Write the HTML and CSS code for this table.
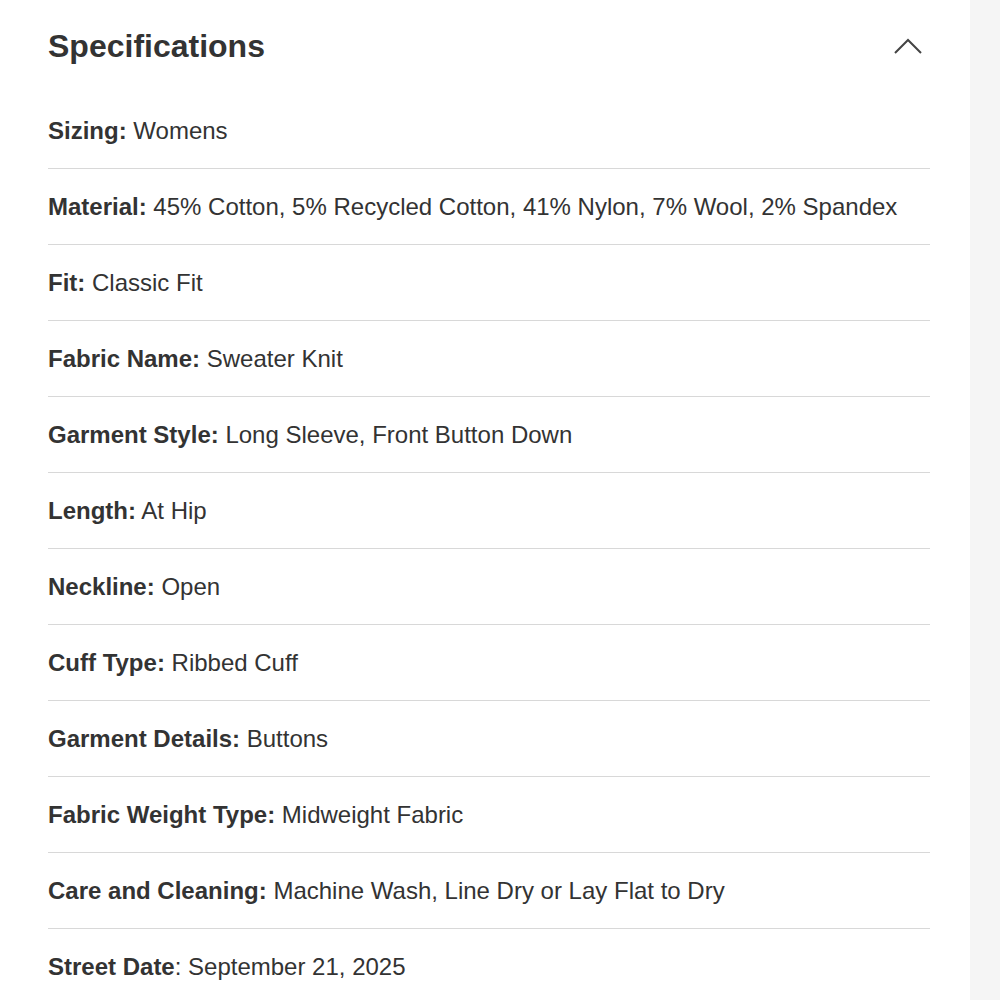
FILE: index.html
```html
<!DOCTYPE html>
<html>
<head>
<meta charset="utf-8">
<link rel="stylesheet" href="styles.css">
</head>
<body>
<div class="page">
  <main class="main">
    <div class="header">
      <h2 class="title">Specifications</h2>
      <svg class="chevron" width="30" height="18" viewBox="0 0 30 18"><path d="M2 16 L15 3 L28 16" fill="none" stroke="#444" stroke-width="2"/></svg>
    </div>
    <ul class="specs">
      <li class="row"><b>Sizing:</b> Womens</li>
      <li class="row"><b>Material:</b> 45% Cotton, 5% Recycled Cotton, 41% Nylon, 7% Wool, 2% Spandex</li>
      <li class="row"><b>Fit:</b> Classic Fit</li>
      <li class="row"><b>Fabric Name:</b> Sweater Knit</li>
      <li class="row"><b>Garment Style:</b> Long Sleeve, Front Button Down</li>
      <li class="row"><b>Length:</b> At Hip</li>
      <li class="row"><b>Neckline:</b> Open</li>
      <li class="row"><b>Cuff Type:</b> Ribbed Cuff</li>
      <li class="row"><b>Garment Details:</b> Buttons</li>
      <li class="row"><b>Fabric Weight Type:</b> Midweight Fabric</li>
      <li class="row"><b>Care and Cleaning:</b> Machine Wash, Line Dry or Lay Flat to Dry</li>
      <li class="row"><b>Street Date</b>: September 21, 2025</li>
    </ul>
  </main>
  <aside class="side"></aside>
</div>
</body>
</html>
```

FILE: styles.css
```css
html, body {
  margin: 0;
  padding: 0;
  background: #fff;
}
.page {
  display: flex;
  height: 1000px;
  overflow: hidden;
  font-family: "Liberation Sans", Arial, Helvetica, sans-serif;
  color: #333;
}
.main {
  flex: 1;
  padding: 0 40px 0 48px;
}
.side {
  width: 30px;
  background: #f5f5f5;
}
.header {
  height: 93px;
  display: flex;
  align-items: center;
  justify-content: space-between;
}
.title {
  margin: 0;
  font-size: 32px;
  font-weight: bold;
  color: #333;
}
.chevron {
  margin-right: 7px;
  margin-top: -2px;
}
.specs {
  list-style: none;
  margin: 0;
  padding: 0;
}
.row {
  height: 75px;
  display: flex;
  align-items: center;
  white-space: pre;
  font-size: 24px;
  padding-top: 1px;
  box-sizing: border-box;
  height: 76px;
  border-bottom: 1px solid #d8d8d8;
}
```
